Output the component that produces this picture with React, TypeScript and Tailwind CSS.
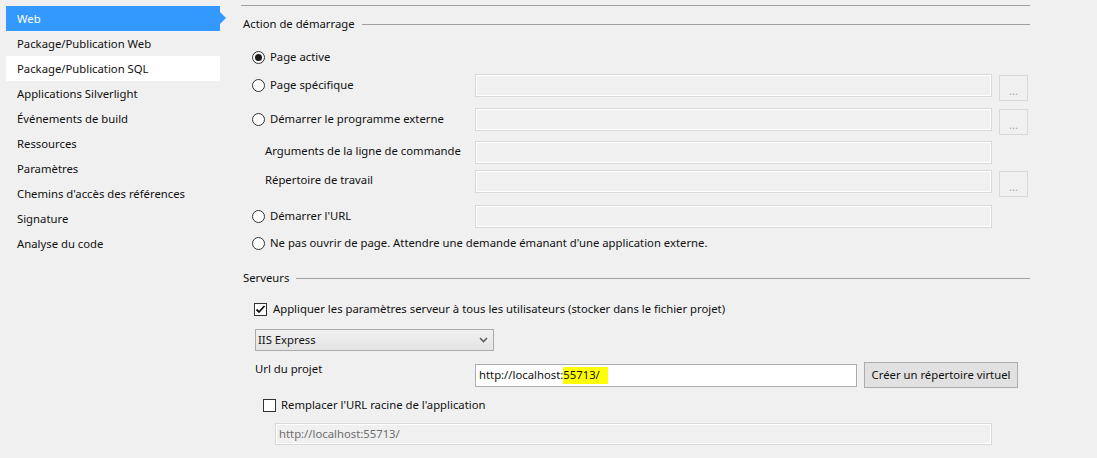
import React from 'react';

const navItems = [
  'Web',
  'Package/Publication Web',
  'Package/Publication SQL',
  'Applications Silverlight',
  'Événements de build',
  'Ressources',
  'Paramètres',
  "Chemins d'accès des références",
  'Signature',
  'Analyse du code',
];

const font = "font-['Noto_Sans',sans-serif]";

const Radio = ({ checked = false }: { checked?: boolean }) => (
  <span className="w-[13px] h-[13px] rounded-full border border-[#333333] bg-white flex items-center justify-center shrink-0">
    {checked && <span className="w-[7px] h-[7px] rounded-full bg-[#1a1a1a]" />}
  </span>
);

const Checkbox = ({ checked = false }: { checked?: boolean }) => (
  <span className="w-[13px] h-[13px] border border-[#333333] bg-white flex items-center justify-center shrink-0">
    {checked && (
      <svg width="11" height="11" viewBox="0 0 11 11">
        <path d="M1.5 5.5 L4 8 L9.5 2" fill="none" stroke="#111" strokeWidth="1.8" />
      </svg>
    )}
  </span>
);

const DisabledBox = ({ className = '' }: { className?: string }) => (
  <div className={`border border-[#d9d9d9] shadow-[inset_0_0_0_1px_#ffffff] bg-[#f0f0f0] ${className}`} />
);

const DotsButton = () => (
  <div className="w-[29px] h-[26px] mt-[1px] ml-[7px] border border-[#d9d9d9] flex items-center justify-center text-[#a8a8a8] text-[11px] leading-none pt-[4px]">
    ...
  </div>
);

const GroupHeader = ({ title, className = '' }: { title: string; className?: string }) => (
  <div className={`flex items-center h-5 ${className}`}>
    <span className="pl-[2px] pr-[7px]">{title}</span>
    <div className="flex-1 h-px bg-[#a0a0a0]" />
  </div>
);

const RadioRow = ({ label, checked = false, className = '', children }: { label: string; checked?: boolean; className?: string; children?: React.ReactNode }) => (
  <div className={`flex items-start ${className}`}>
    <div className="w-[234px] h-[22px] flex items-center pl-[11px] gap-[5px] shrink-0">
      <Radio checked={checked} />
      <span className="whitespace-nowrap">{label}</span>
    </div>
    {children}
  </div>
);

export default function App() {
  return (
    <div className={`w-[1097px] h-[458px] bg-[#f0f0f0] flex text-[11.3px] text-[#111111] overflow-hidden ${font}`}>
      <nav className="w-[220px] pl-[6px] pt-[6px] shrink-0">
        {navItems.map((item, i) => (
          <div
            key={item}
            className={`relative h-[25px] pl-[11px] pt-[1px] flex items-center ${i === 0 ? 'bg-[#3399ff] text-white' : i === 2 ? 'bg-white' : ''}`}
          >
            {item}
            {i === 0 && (
              <span className="absolute right-[-6px] top-[6px] w-0 h-0 border-y-[6px] border-y-transparent border-l-[6px] border-l-[#3399ff]" />
            )}
          </div>
        ))}
      </nav>

      <main className="ml-[21px] w-[789px] pt-[5px]">
        <div className="h-px bg-[#a0a0a0]" />

        <GroupHeader title="Action de démarrage" className="mt-[8px]" />

        <div className="mt-[12px] h-[22px] flex items-center pl-[11px] gap-[5px]">
          <Radio checked />
          <span>Page active</span>
        </div>

        <RadioRow label="Page spécifique" className="mt-[6px]">
          <DisabledBox className="w-[517px] h-[23px]" />
          <DotsButton />
        </RadioRow>

        <RadioRow label="Démarrer le programme externe" className="mt-[7px]">
          <DisabledBox className="w-[517px] h-[23px]" />
          <DotsButton />
        </RadioRow>

        <div className="flex items-start mt-[6px]">
          <div className="w-[234px] h-[21px] flex items-center pl-[24px] shrink-0">Arguments de la ligne de commande</div>
          <DisabledBox className="w-[517px] h-[23px]" />
        </div>

        <div className="flex items-start mt-[6px]">
          <div className="w-[234px] h-[21px] flex items-center pl-[24px] shrink-0">Répertoire de travail</div>
          <DisabledBox className="w-[517px] h-[23px]" />
          <DotsButton />
        </div>

        <RadioRow label="Démarrer l'URL" className="mt-[8px]">
          <DisabledBox className="w-[517px] h-[23px]" />
        </RadioRow>

        <div className="mt-[4px] h-[22px] flex items-center pl-[11px] gap-[5px]">
          <Radio />
          <span className="whitespace-nowrap">Ne pas ouvrir de page. Attendre une demande émanant d'une application externe.</span>
        </div>

        <GroupHeader title="Serveurs" className="mt-[14px]" />

        <div className="mt-[10px] h-[22px] flex items-center pl-[13px] gap-[6px]">
          <Checkbox checked />
          <span className="whitespace-nowrap">Appliquer les paramètres serveur à tous les utilisateurs (stocker dans le fichier projet)</span>
        </div>

        <div className="mt-[9px] ml-[14px] w-[239px] h-[22px] border border-[#acacac] bg-gradient-to-b from-[#f0f0f0] to-[#e5e5e5] flex items-center pl-[2px] pr-[5px] justify-between">
          <span>IIS Express</span>
          <svg width="9" height="6" viewBox="0 0 9 6">
            <path d="M1 1 L4.5 4.5 L8 1" fill="none" stroke="#606060" strokeWidth="1.6" />
          </svg>
        </div>

        <div className="mt-[11px] flex items-start">
          <div className="w-[234px] h-[15px] flex items-center pl-[14px] shrink-0">Url du projet</div>
          <div className="mt-[2px] w-[382px] h-[23px] border border-[#abadb3] bg-white flex items-center pl-[3px] whitespace-nowrap">
            http://localhost:<span className="bg-[#ffff00] pr-[8px]">55713/</span>
          </div>
          <button className="ml-[7px] w-[154px] h-[26px] border border-[#adadad] bg-[#e1e1e1] flex items-center justify-center">
            Créer un répertoire virtuel
          </button>
        </div>

        <div className="mt-[6px] h-[22px] flex items-center pl-[22px] gap-[5px]">
          <Checkbox />
          <span>Remplacer l'URL racine de l'application</span>
        </div>

        <div className="mt-[7px] ml-[34px] w-[717px] h-[22px] border border-[#d9d9d9] shadow-[inset_0_0_0_1px_#ffffff] flex items-center pl-[3px] text-[#6d6d6d]">
          http://localhost:55713/
        </div>
      </main>
    </div>
  );
}
